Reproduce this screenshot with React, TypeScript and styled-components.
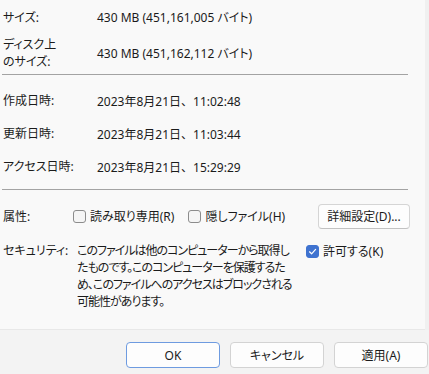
import React from 'react';
import styled, {createGlobalStyle} from 'styled-components';

const GlobalStyle = createGlobalStyle`
  html, body {
    margin: 0;
    padding: 0;
    background: #f0f0f0;
  }
  body {
    font-family: "Noto Sans", "Noto Sans CJK JP", sans-serif;
    font-size: 12px;
    color: #1b1b1b;
    font-feature-settings: "palt";
  }
`

const dates = [
    {label: "作成日時:", value: "2023年8月21日、11:02:48"},
    {label: "更新日時:", value: "2023年8月21日、11:03:44"},
    {label: "アクセス日時:", value: "2023年8月21日、15:29:29"},
]

const securityLines = [
    "このファイルは他のコンピューターから取得し",
    "たものです。このコンピューターを保護するた",
    "め、このファイルへのアクセスはブロックされる",
    "可能性があります。",
]

const Check = ({checked}: { checked?: boolean }) => (
    <Box $checked={checked}>
        {checked && (
            <svg width="9" height="9" viewBox="0 0 9 9">
                <path d="M1.5 4.8 L3.6 6.8 L7.6 2.4" fill="none" stroke="#ffffff" strokeWidth="1.2"
                      strokeLinecap="round" strokeLinejoin="round"/>
            </svg>
        )}
    </Box>
)

export default function App() {
    return (
        <Window>
            <GlobalStyle/>
            <Panel>
                <Row $height={18}>
                    <Label>サイズ:</Label>
                    <Value>430 MB (451,161,005 バイト)</Value>
                </Row>
                <Row $height={34} $top={10}>
                    <Label>ディスク上<br/>のサイズ:</Label>
                    <Value>430 MB (451,162,112 バイト)</Value>
                </Row>
                <Separator $top={4}/>
                <DateList>
                    {dates.map((d, index) => (
                        <Row key={index} $height={33}>
                            <Label>{d.label}</Label>
                            <DateValue>{d.value}</DateValue>
                        </Row>
                    ))}
                </DateList>
                <Separator $top={6}/>
                <AttrRow>
                    <ShortLabel $width={70}>属性:</ShortLabel>
                    <CheckItem><Check/>読み取り専用(R)</CheckItem>
                    <CheckItem><Check/>隠しファイル(H)</CheckItem>
                    <Spacer/>
                    <SmallButton>詳細設定(D)...</SmallButton>
                </AttrRow>
                <SecurityRow>
                    <ShortLabel $width={74}>セキュリティ:</ShortLabel>
                    <SecurityText>
                        {securityLines.map((l, i) => <div key={i}>{l}</div>)}
                    </SecurityText>
                    <AllowItem><Check checked/>許可する(K)</AllowItem>
                </SecurityRow>
            </Panel>
            <Footer>
                <DialogButton $primary>OK</DialogButton>
                <DialogButton>キャンセル</DialogButton>
                <DialogButton>適用(A)</DialogButton>
            </Footer>
        </Window>
    );
}

const Window = styled.div`
  width: 429px;
  height: 374px;
  display: flex;
  flex-direction: column;
  overflow: hidden;
`

const Panel = styled.div`
  width: 425px;
  height: 330px;
  box-sizing: border-box;
  background: #f9f9f9;
  border-bottom: 1px solid #e8e8e8;
  padding: 8px 0 0 2px;
  display: flex;
  flex-direction: column;
`

const Row = styled.div<{ $height: number, $top?: number }>`
  display: flex;
  align-items: center;
  height: ${p => p.$height}px;
  margin-top: ${p => p.$top || 0}px;
  padding-left: 1px;
`

const Label = styled.div`
  width: 94px;
  flex-shrink: 0;
  line-height: 17px;
`

const Value = styled.div`
  white-space: nowrap;
`

const DateValue = styled(Value)`
  font-feature-settings: normal;
`

const DateList = styled.div`
  display: flex;
  flex-direction: column;
  margin-top: 9px;
`

const Separator = styled.div<{ $top: number }>`
  width: 406px;
  height: 1px;
  background: #a3a3a3;
  margin-top: ${p => p.$top}px;
`

const AttrRow = styled.div`
  display: flex;
  align-items: center;
  width: 408px;
  height: 26px;
  margin-top: 13px;
  padding-left: 1px;
  box-sizing: border-box;
`

const ShortLabel = styled.div<{ $width: number }>`
  width: ${p => p.$width}px;
  flex-shrink: 0;
`

const CheckItem = styled.label`
  display: flex;
  align-items: center;
  gap: 4px;
  margin-right: 14px;
  white-space: nowrap;
`

const AllowItem = styled(CheckItem)`
  margin-top: 1px;
`

const Box = styled.span<{ $checked?: boolean }>`
  width: 13px;
  height: 13px;
  box-sizing: border-box;
  border-radius: 3px;
  border: 1px solid ${p => p.$checked ? "#3f73d0" : "#8c8c8c"};
  background: ${p => p.$checked ? "#3f73d0" : "#f5f5f5"};
  display: flex;
  align-items: center;
  justify-content: center;
`

const Spacer = styled.div`
  flex: 1;
`

const SmallButton = styled.button`
  font: inherit;
  color: inherit;
  height: 25px;
  width: 92px;
  padding: 0;
  background: #fdfdfd;
  border: 1px solid #d5d5d5;
  border-bottom-color: #c2c2c2;
  border-radius: 4px;
`

const SecurityRow = styled.div`
  display: flex;
  align-items: flex-start;
  margin-top: 13px;
  padding-left: 1px;
  line-height: 17px;
`

const SecurityText = styled.div`
  width: 215px;
  flex-shrink: 0;
  margin-right: 14px;
  white-space: nowrap;
  letter-spacing: -1px;
`

const Footer = styled.div`
  flex: 1;
  background: #f3f3f3;
  display: flex;
  justify-content: flex-end;
  align-items: flex-start;
  gap: 10px;
  padding: 12px 1px 0 0;
`

const DialogButton = styled.button<{ $primary?: boolean }>`
  font: inherit;
  color: inherit;
  width: 94px;
  height: 26px;
  padding: 0;
  background: #fdfdfd;
  border: 1px solid ${p => p.$primary ? "#6e9be0" : "#d3d3d3"};
  border-radius: 4px;
`
